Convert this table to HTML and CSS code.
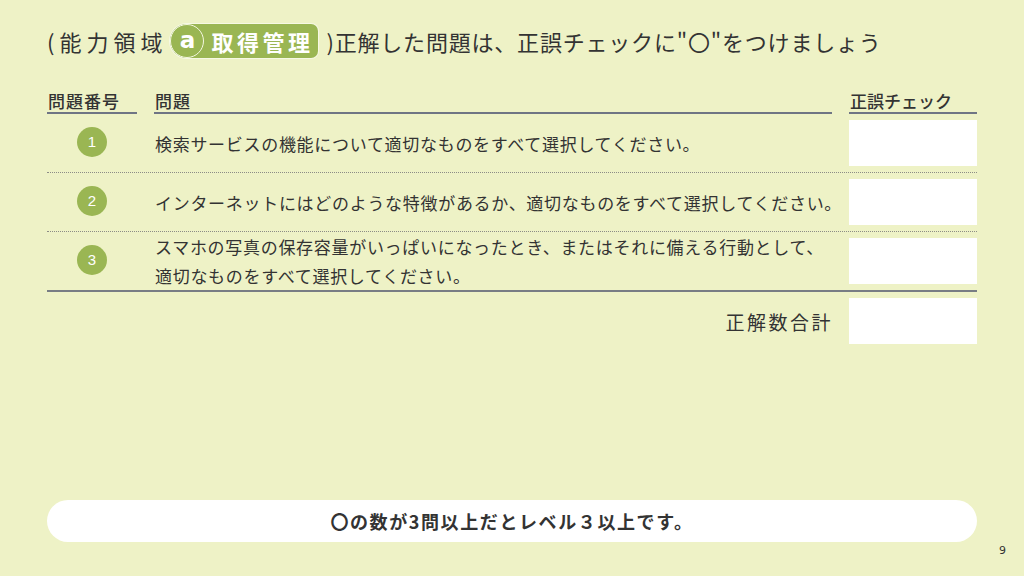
FILE: index.html
```html
<!DOCTYPE html>
<html lang="ja">
<head>
<meta charset="utf-8">
<title>正誤チェック</title>
<link rel="stylesheet" href="styles.css">
</head>
<body>
<div class="page">
  <h1 class="title">
    <span class="title-pre">(能力領域</span>
    <span class="badge"><span class="badge-letter">a</span><span class="badge-text">取得管理</span></span>
    <span class="title-post">)正解した問題は、正誤チェックに"〇"をつけましょう</span>
  </h1>

  <div class="table">
    <div class="thead">
      <div class="th col-num">問題番号</div>
      <div class="th col-q">問題</div>
      <div class="th col-check">正誤チェック</div>
    </div>

    <div class="row dotted">
      <div class="col-num"><span class="num">1</span></div>
      <div class="col-q q">検索サービスの機能について適切なものをすべて選択してください。</div>
      <div class="col-check"><div class="box"></div></div>
    </div>
    <div class="row dotted">
      <div class="col-num"><span class="num">2</span></div>
      <div class="col-q q">インターネットにはどのような特徴があるか、適切なものをすべて選択してください。</div>
      <div class="col-check"><div class="box"></div></div>
    </div>
    <div class="row solid">
      <div class="col-num"><span class="num">3</span></div>
      <div class="col-q q">スマホの写真の保存容量がいっぱいになったとき、またはそれに備える行動として、<br>適切なものをすべて選択してください。</div>
      <div class="col-check"><div class="box"></div></div>
    </div>
    <div class="row total">
      <div class="total-label">正解数合計</div>
      <div class="col-check"><div class="box"></div></div>
    </div>
  </div>

  <div class="note">〇の数が3問以上だとレベル３以上です。</div>
  <div class="page-no">9</div>
</div>
</body>
</html>
```

FILE: styles.css
```css
* { box-sizing: border-box; }
html, body {
  margin: 0;
  padding: 0;
  background: #eef2c6;
}
body {
  font-family: "Noto Sans CJK JP", "Noto Sans", sans-serif;
  color: #333333;
}
.page {
  width: 1024px;
  height: 576px;
  padding: 24px 47px 18px;
  display: flex;
  flex-direction: column;
}
.title {
  margin: 0;
  height: 34px;
  display: flex;
  align-items: center;
  font-size: 22px;
  font-weight: 400;
  line-height: 34px;
  white-space: nowrap;
}
.title-pre { letter-spacing: 5px; }
.title-post { letter-spacing: 0.8px; margin-left: 8px; }
.badge {
  display: flex;
  align-items: center;
  height: 34px;
  margin-left: 3px;
  background: #9ab653;
  border-radius: 17px 7px 7px 17px;
  padding-right: 5px;
  box-shadow: 0 0 0 1px #f6f8e4;
}
.badge-letter {
  width: 34px;
  height: 34px;
  border-radius: 50%;
  border: 1.5px solid #f4f7e0;
  background: #9ab653;
  color: #ffffff;
  font-family: "DejaVu Sans", sans-serif;
  font-size: 23px;
  font-weight: 700;
  line-height: 31px;
  text-align: center;
}
.badge-text {
  color: #ffffff;
  font-size: 22px;
  font-weight: 700;
  letter-spacing: 3.5px;
  margin-left: 7px;
}
.table {
  margin-top: 31px;
  width: 930px;
}
.thead {
  display: flex;
  gap: 17px;
}
.th {
  font-size: 17px;
  font-weight: 500;
  letter-spacing: 1px;
  line-height: 23px;
  border-bottom: 2px solid #6f7584;
  padding-left: 1px;
}
.th.col-check { letter-spacing: 0; }
.col-num { width: 90px; flex: none; }
.col-q { width: 678px; flex: none; }
.col-check { width: 128px; flex: none; }
.row {
  display: flex;
  align-items: center;
  gap: 17px;
  height: 58px;
}
.row.dotted { height: 59px; border-bottom: 1px dotted #8c8c86; }
.row.solid { height: 60px; border-bottom: 2px solid #787d84; }
.row .col-num {
  display: flex;
  justify-content: center;
}
.num {
  width: 30px;
  height: 30px;
  margin-top: -3px;
  border-radius: 50%;
  background: #9ab653;
  color: #ffffff;
  font-family: "Liberation Sans", sans-serif;
  font-size: 15px;
  line-height: 30px;
  text-align: center;
}
.q {
  font-size: 17px;
  letter-spacing: 0.7px;
  line-height: 29px;
  padding-left: 1px;
  white-space: nowrap;
}
.box {
  height: 46px;
  background: #ffffff;
}
.total {
  height: 58px;
}
.total-label {
  flex: 1;
  text-align: right;
  font-size: 19px;
  letter-spacing: 2.5px;
  margin-right: -1px;
}
.note {
  margin-top: auto;
  height: 42px;
  background: #ffffff;
  border-radius: 21px;
  display: flex;
  align-items: center;
  justify-content: center;
  font-size: 18px;
  font-weight: 700;
  letter-spacing: 1.6px;
}
.page-no {
  margin: 2px -29px 0 0;
  height: 14px;
  line-height: 14px;
  font-family: "DejaVu Sans", sans-serif;
  font-size: 11px;
  text-align: right;
}
```
